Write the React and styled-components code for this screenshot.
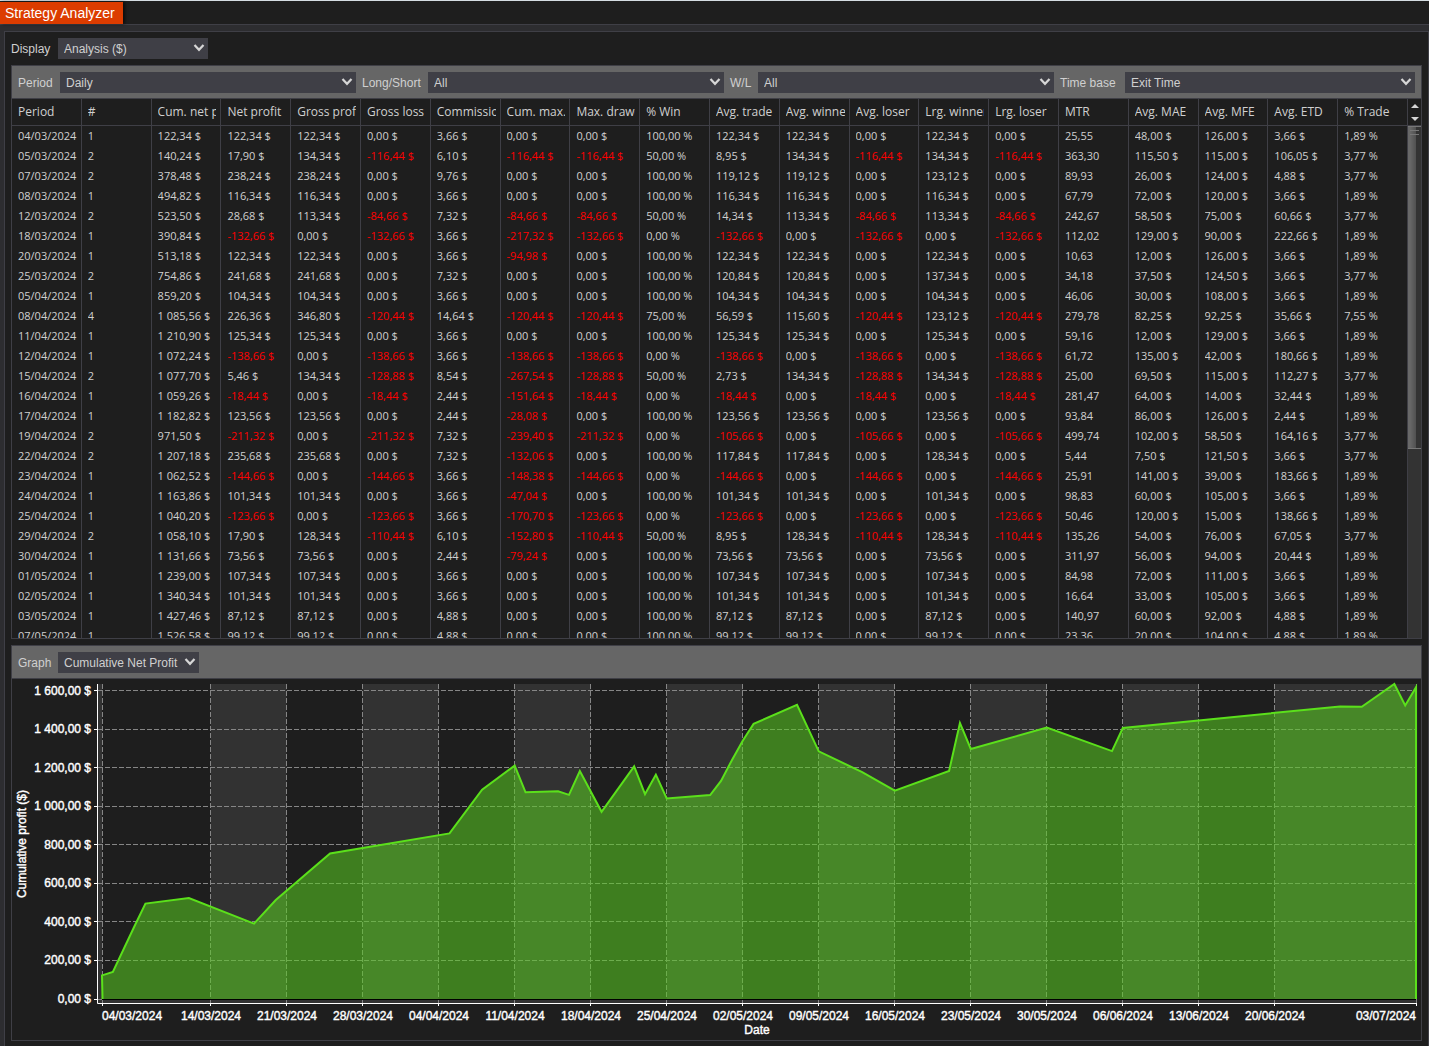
import React from "react";
import styled, { createGlobalStyle } from "styled-components";

const GlobalStyle = createGlobalStyle`
  :root {
    --base: #1e1e1e;
    --frame: #2d2d30;
    --line: #3f3f46;
    --bar: #666666;
    --text: #d0d0d0;
    --loss: #ff0000;
    --accent: #dc3c00;
  }
  * {
    box-sizing: border-box;
  }
  body {
    margin: 0;
    background: var(--frame);
    color: var(--text);
    font-family: "Liberation Sans", Arial, sans-serif;
    font-size: 12px;
  }
`;

const Window = styled.div`
  display: flex;
  flex-direction: column;
  height: 100vh;
  min-height: 800px;
  border-top: 1px solid #d5dde2;
`;

const TabStrip = styled.nav`
  display: flex;
  padding-top: 1px;
  height: 24px;
  background: var(--base);
  border-bottom: 1px solid var(--line);
`;

const Tab = styled.button`
  padding: 0 8px 0 5px;
  border: none;
  background: var(--accent);
  color: #fff;
  font-family: inherit;
  font-size: 14px;
  box-shadow: 2px 0 3px rgba(0, 0, 0, 0.6);
`;

const Panel = styled.main`
  display: flex;
  flex-direction: column;
  flex: 1;
  min-height: 0;
  margin: 6px 0 0 4px;
  padding: 6px 6px 5px;
  background: var(--base);
  border: 1px solid var(--line);
  border-bottom: none;
`;

const DisplayRow = styled.div`
  display: grid;
  grid-template-columns: 47px 150px;
  align-items: center;
  margin-bottom: 6px;
`;

const Box = styled.section`
  display: flex;
  flex-direction: column;
  border: 1px solid var(--line);
`;

const TableBox = styled(Box)`
  flex: 1;
  min-height: 0;
  margin-bottom: 6px;
`;

const Bar = styled.div`
  display: grid;
  grid-template-columns: ${({ $columns }) => $columns};
  align-items: center;
  padding: 6px 6px 5px;
  background: var(--bar);
  border-bottom: 1px solid var(--line);
`;

const Label = styled.label`
  height: 21px;
  padding-left: ${({ $inset }) => ($inset ? "6px" : 0)};
  font-size: 12px;
  line-height: 22px;
  white-space: nowrap;
`;

const SelectWrap = styled.div`
  position: relative;
  svg {
    position: absolute;
    top: 6px;
    right: 3px;
    pointer-events: none;
  }
`;

const Select = styled.select`
  display: block;
  appearance: none;
  width: 100%;
  height: 21px;
  padding: 0 18px 0 6px;
  border: none;
  border-radius: 0;
  background: var(--line);
  color: var(--text);
  font-family: inherit;
  font-size: 12px;
`;

const Scroller = styled.div`
  display: flex;
  flex: 1;
  min-height: 0;
  overflow: hidden;
`;

const Table = styled.table`
  flex: 1;
  min-width: 0;
  width: 100%;
  table-layout: fixed;
  border-spacing: 0;
  font-family: "Open Sans", "Noto Sans", sans-serif;
`;

const Th = styled.th`
  height: 27px;
  padding: 0 4px 0 6px;
  border-right: 1px solid var(--line);
  border-bottom: 1px solid var(--line);
  font-size: 12px;
  font-weight: 400;
  text-align: left;
`;

const Td = styled.td`
  height: 20px;
  padding: 0 4px 0 6px;
  border-right: 1px solid var(--line);
  color: ${({ $loss }) => ($loss ? "var(--loss)" : "inherit")};
  font-size: 11px;
`;

const Clip = styled.div`
  overflow: hidden;
  line-height: 20px;
  white-space: nowrap;
`;

const Rail = styled.div`
  display: flex;
  flex-direction: column;
  width: 13px;
  background: #333;
`;

const Steps = styled.div`
  display: grid;
  grid-template-rows: 1fr 1fr;
  height: 27px;
  background: var(--base);
  border-bottom: 1px solid var(--line);
`;

const Step = styled.button`
  display: flex;
  align-items: center;
  justify-content: center;
  padding: 0;
  border: none;
  background: none;
`;

const Track = styled.div`
  flex: 1;
`;

const Thumb = styled.div`
  height: 63%;
  padding: 3px 2px;
  border-top: 1px solid #777;
  border-bottom: 1px solid #777;
  background: linear-gradient(90deg, #686868 0 2px, #505050 8px, #333 8px);
`;

const Grip = styled.div`
  height: 5px;
  border-top: 1px solid #777;
  border-bottom: 1px solid #777;
`;

const Chart = styled.svg`
  display: block;
  width: 100%;
  height: auto;
  text {
    font-family: "Liberation Sans", Arial, sans-serif;
    font-size: 12px;
    fill: #fff;
    stroke: #fff;
    stroke-width: 0.4px;
  }
`;

const headers = [
  "Period", "#", "Cum. net profit", "Net profit", "Gross profit",
  "Gross loss", "Commission", "Cum. max. drawdown", "Max. drawdown", "% Win",
  "Avg. trade", "Avg. winner", "Avg. loser", "Lrg. winner", "Lrg. loser",
  "MTR", "Avg. MAE", "Avg. MFE", "Avg. ETD", "% Trade"
];

// "$" and "%" suffixes are added per column
const units = headers.map((name, i) => {
  if (i < 2 || name === "MTR") return "";
  return name.startsWith("%") ? " %" : " $";
});

const rows = [
  "04/03/2024|1|122,34|122,34|122,34|0,00|3,66|0,00|0,00|100,00|122,34|122,34|0,00|122,34|0,00|25,55|48,00|126,00|3,66|1,89",
  "05/03/2024|2|140,24|17,90|134,34|-116,44|6,10|-116,44|-116,44|50,00|8,95|134,34|-116,44|134,34|-116,44|363,30|115,50|115,00|106,05|3,77",
  "07/03/2024|2|378,48|238,24|238,24|0,00|9,76|0,00|0,00|100,00|119,12|119,12|0,00|123,12|0,00|89,93|26,00|124,00|4,88|3,77",
  "08/03/2024|1|494,82|116,34|116,34|0,00|3,66|0,00|0,00|100,00|116,34|116,34|0,00|116,34|0,00|67,79|72,00|120,00|3,66|1,89",
  "12/03/2024|2|523,50|28,68|113,34|-84,66|7,32|-84,66|-84,66|50,00|14,34|113,34|-84,66|113,34|-84,66|242,67|58,50|75,00|60,66|3,77",
  "18/03/2024|1|390,84|-132,66|0,00|-132,66|3,66|-217,32|-132,66|0,00|-132,66|0,00|-132,66|0,00|-132,66|112,02|129,00|90,00|222,66|1,89",
  "20/03/2024|1|513,18|122,34|122,34|0,00|3,66|-94,98|0,00|100,00|122,34|122,34|0,00|122,34|0,00|10,63|12,00|126,00|3,66|1,89",
  "25/03/2024|2|754,86|241,68|241,68|0,00|7,32|0,00|0,00|100,00|120,84|120,84|0,00|137,34|0,00|34,18|37,50|124,50|3,66|3,77",
  "05/04/2024|1|859,20|104,34|104,34|0,00|3,66|0,00|0,00|100,00|104,34|104,34|0,00|104,34|0,00|46,06|30,00|108,00|3,66|1,89",
  "08/04/2024|4|1 085,56|226,36|346,80|-120,44|14,64|-120,44|-120,44|75,00|56,59|115,60|-120,44|123,12|-120,44|279,78|82,25|92,25|35,66|7,55",
  "11/04/2024|1|1 210,90|125,34|125,34|0,00|3,66|0,00|0,00|100,00|125,34|125,34|0,00|125,34|0,00|59,16|12,00|129,00|3,66|1,89",
  "12/04/2024|1|1 072,24|-138,66|0,00|-138,66|3,66|-138,66|-138,66|0,00|-138,66|0,00|-138,66|0,00|-138,66|61,72|135,00|42,00|180,66|1,89",
  "15/04/2024|2|1 077,70|5,46|134,34|-128,88|8,54|-267,54|-128,88|50,00|2,73|134,34|-128,88|134,34|-128,88|25,00|69,50|115,00|112,27|3,77",
  "16/04/2024|1|1 059,26|-18,44|0,00|-18,44|2,44|-151,64|-18,44|0,00|-18,44|0,00|-18,44|0,00|-18,44|281,47|64,00|14,00|32,44|1,89",
  "17/04/2024|1|1 182,82|123,56|123,56|0,00|2,44|-28,08|0,00|100,00|123,56|123,56|0,00|123,56|0,00|93,84|86,00|126,00|2,44|1,89",
  "19/04/2024|2|971,50|-211,32|0,00|-211,32|7,32|-239,40|-211,32|0,00|-105,66|0,00|-105,66|0,00|-105,66|499,74|102,00|58,50|164,16|3,77",
  "22/04/2024|2|1 207,18|235,68|235,68|0,00|7,32|-132,06|0,00|100,00|117,84|117,84|0,00|128,34|0,00|5,44|7,50|121,50|3,66|3,77",
  "23/04/2024|1|1 062,52|-144,66|0,00|-144,66|3,66|-148,38|-144,66|0,00|-144,66|0,00|-144,66|0,00|-144,66|25,91|141,00|39,00|183,66|1,89",
  "24/04/2024|1|1 163,86|101,34|101,34|0,00|3,66|-47,04|0,00|100,00|101,34|101,34|0,00|101,34|0,00|98,83|60,00|105,00|3,66|1,89",
  "25/04/2024|1|1 040,20|-123,66|0,00|-123,66|3,66|-170,70|-123,66|0,00|-123,66|0,00|-123,66|0,00|-123,66|50,46|120,00|15,00|138,66|1,89",
  "29/04/2024|2|1 058,10|17,90|128,34|-110,44|6,10|-152,80|-110,44|50,00|8,95|128,34|-110,44|128,34|-110,44|135,26|54,00|76,00|67,05|3,77",
  "30/04/2024|1|1 131,66|73,56|73,56|0,00|2,44|-79,24|0,00|100,00|73,56|73,56|0,00|73,56|0,00|311,97|56,00|94,00|20,44|1,89",
  "01/05/2024|1|1 239,00|107,34|107,34|0,00|3,66|0,00|0,00|100,00|107,34|107,34|0,00|107,34|0,00|84,98|72,00|111,00|3,66|1,89",
  "02/05/2024|1|1 340,34|101,34|101,34|0,00|3,66|0,00|0,00|100,00|101,34|101,34|0,00|101,34|0,00|16,64|33,00|105,00|3,66|1,89",
  "03/05/2024|1|1 427,46|87,12|87,12|0,00|4,88|0,00|0,00|100,00|87,12|87,12|0,00|87,12|0,00|140,97|60,00|92,00|4,88|1,89",
  "07/05/2024|1|1 526,58|99,12|99,12|0,00|4,88|0,00|0,00|100,00|99,12|99,12|0,00|99,12|0,00|23,36|20,00|104,00|4,88|1,89"
].map(row => row.split("|"));

// [days since 04/03/2024, cumulative profit]
const points = [
  [0, 122.34], [1, 140.24], [3, 378.48], [4, 494.82], [8, 523.5],
  [14, 390.84], [16, 513.18], [21, 754.86], [32, 859.2], [35, 1085.56],
  [38, 1210.9], [39, 1072.24], [42, 1077.7], [43, 1059.26], [44, 1182.82],
  [46, 971.5], [49, 1207.18], [50, 1062.52], [51, 1163.86], [52, 1040.2],
  [56, 1058.1], [57, 1131.66], [58, 1239], [59, 1340.34], [60, 1427.46],
  [64, 1526.58], [66, 1285], [70, 1177], [73, 1081], [78, 1183],
  [79, 1432], [80, 1297], [87, 1408], [93, 1286], [94, 1406],
  [114, 1518], [116, 1516], [119, 1634], [120, 1523], [121, 1618]
];

const dates = [
  [0, "04/03/2024"], [10, "14/03/2024"], [17, "21/03/2024"],
  [24, "28/03/2024"], [31, "04/04/2024"], [38, "11/04/2024"],
  [45, "18/04/2024"], [52, "25/04/2024"], [59, "02/05/2024"],
  [66, "09/05/2024"], [73, "16/05/2024"], [80, "23/05/2024"],
  [87, "30/05/2024"], [94, "06/06/2024"], [101, "13/06/2024"],
  [108, "20/06/2024"], [121, "03/07/2024"]
];

const amounts = [
  "0,00 $", "200,00 $", "400,00 $", "600,00 $", "800,00 $",
  "1 000,00 $", "1 200,00 $", "1 400,00 $", "1 600,00 $"
];

const bands = [[10, 17], [24, 31], [38, 45], [52, 59], [66, 73], [80, 87], [94, 101], [108, 121]];

const px = day => 90 + day * 10.86;
const py = value => 320 - value * 0.19275;
const snap = n => Math.floor(n) + 0.5;

const Dropdown = ({ id, value }) => (
  <SelectWrap>
    <Select id={id} defaultValue={value}>
      <option>{value}</option>
    </Select>
    <svg width="12" height="8" viewBox="0 0 12 8" aria-hidden="true">
      <path d="M1.5 1 L6 5.8 L10.5 1" fill="none" stroke="#d6d6d6" strokeWidth="2.2" />
    </svg>
  </SelectWrap>
);

const ProfitChart = () => {
  const line = points.map(([d, v]) => `${px(d)},${py(v)}`).join(" L");
  return (
    <Chart viewBox="0 0 1409 361" role="img" aria-label="Cumulative Net Profit">
      <rect x="86" y="5" width="4" height="319" fill="#323232" />
      <rect x="86" y="320" width="1319" height="4" fill="#323232" />
      {bands.map(([from, to]) => (
        <rect key={from} x={px(from)} y="5" width={px(to) - px(from)} height="319" fill="#323232" />
      ))}
      <g stroke="#868686" strokeDasharray="5 2">
        {amounts.map((label, i) => (
          <line key={label} x1="86" x2="1404" y1={snap(py(i * 200))} y2={snap(py(i * 200))} />
        ))}
        {dates.map(([d]) => (
          <line key={d} x1={snap(px(d))} x2={snap(px(d))} y1="5" y2="324" />
        ))}
      </g>
      <path d={`M90,320 L${line} L1404,320 Z`} fill="#5ace20" fillOpacity="0.55" />
      <line x1="90" x2="1404" y1="320.5" y2="320.5" stroke="#000" />
      <path d={`M90.5,320 L${line} L1404,320`} fill="none" stroke="#5be01b" strokeWidth="2" />
      <path d="M85.5 5 V324.5 H1405" fill="none" stroke="#fff" />
      {amounts.map((label, i) => (
        <g key={label}>
          <line x1="82" x2="86" y1={snap(py(i * 200))} y2={snap(py(i * 200))} stroke="#fff" />
          <text x="79" y={Math.round(py(i * 200)) + 4} textAnchor="end">
            {label}
          </text>
        </g>
      ))}
      {dates.map(([d, label], i) => (
        <g key={d}>
          <line x1={snap(px(d))} x2={snap(px(d))} y1="324" y2="327" stroke="#fff" />
          <text
            x={Math.round(px(d))}
            y="341"
            textAnchor={i === 0 ? "start" : i === dates.length - 1 ? "end" : "middle"}
          >
            {label}
          </text>
        </g>
      ))}
      <text x="745" y="355" textAnchor="middle">
        Date
      </text>
      <text transform="translate(14 165) rotate(-90)" textAnchor="middle">
        Cumulative profit ($)
      </text>
    </Chart>
  );
};

export default function App() {
  return (
    <React.Fragment>
      <GlobalStyle />
      <Window>
        <TabStrip>
          <Tab type="button">Strategy Analyzer</Tab>
        </TabStrip>
        <Panel>
          <DisplayRow>
            <Label htmlFor="display">Display</Label>
            <Dropdown id="display" value="Analysis ($)" />
          </DisplayRow>
          <TableBox>
            <Bar $columns="42px 296fr 72px 296fr 34px 296fr 71px 290fr">
              <Label htmlFor="period">Period</Label>
              <Dropdown id="period" value="Daily" />
              <Label htmlFor="side" $inset>Long/Short</Label>
              <Dropdown id="side" value="All" />
              <Label htmlFor="result" $inset>W/L</Label>
              <Dropdown id="result" value="All" />
              <Label htmlFor="base" $inset>Time base</Label>
              <Dropdown id="base" value="Exit Time" />
            </Bar>
            <Scroller>
              <Table>
                <thead>
                  <tr>
                    {headers.map(name => (
                      <Th key={name} scope="col">
                        <Clip>{name}</Clip>
                      </Th>
                    ))}
                  </tr>
                </thead>
                <tbody>
                  {rows.map(row => (
                    <tr key={row[0]}>
                      {row.map((value, i) => (
                        <Td key={headers[i]} $loss={value.startsWith("-")}>
                          <Clip>{value + units[i]}</Clip>
                        </Td>
                      ))}
                    </tr>
                  ))}
                </tbody>
              </Table>
              <Rail>
                <Steps>
                  <Step type="button" aria-label="Scroll up">
                    <svg width="8" height="4" viewBox="0 0 8 4">
                      <path d="M0 4 L4 0 L8 4 Z" fill="#d6d6d6" />
                    </svg>
                  </Step>
                  <Step type="button" aria-label="Scroll down">
                    <svg width="8" height="4" viewBox="0 0 8 4">
                      <path d="M0 0 L4 4 L8 0 Z" fill="#d6d6d6" />
                    </svg>
                  </Step>
                </Steps>
                <Track>
                  <Thumb>
                    <Grip />
                  </Thumb>
                </Track>
              </Rail>
            </Scroller>
          </TableBox>
          <Box>
            <Bar $columns="40px 141px">
              <Label htmlFor="graph">Graph</Label>
              <Dropdown id="graph" value="Cumulative Net Profit" />
            </Bar>
            <ProfitChart />
          </Box>
        </Panel>
      </Window>
    </React.Fragment>
  );
}
